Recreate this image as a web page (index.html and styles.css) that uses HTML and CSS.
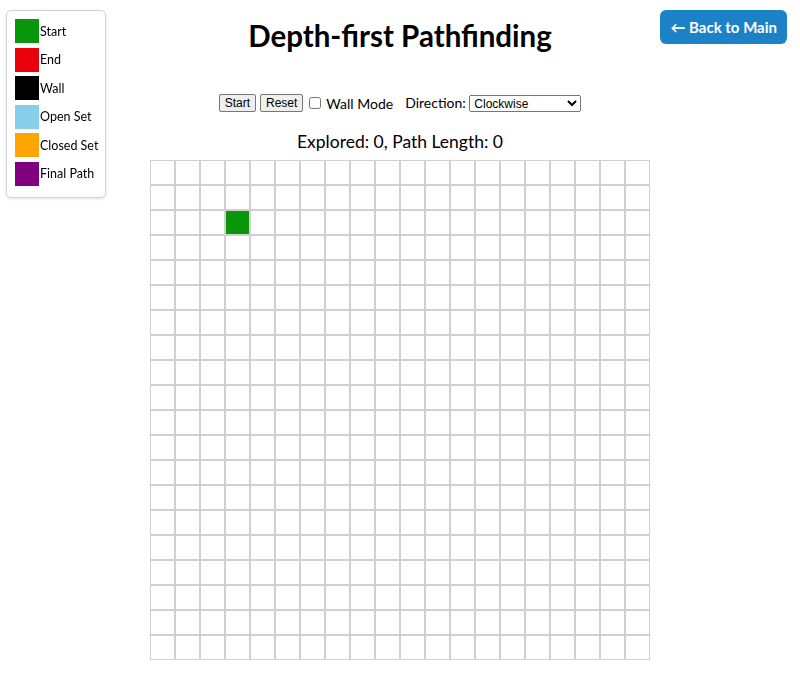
FILE: index.html
```html
<!DOCTYPE html>
<html lang="en">
<head>
    <meta charset="UTF-8">
    <meta name="viewport" content="width=device-width, initial-scale=1.0">
    <title>Depth-first Pathfinding</title>
    <link rel="stylesheet" href="styles.css">
</head>
<body>
    <!-- Legend -->
    <div class="legend">
        <div class="legend-item"><span class="swatch start"></span>Start</div>
        <div class="legend-item"><span class="swatch end"></span>End</div>
        <div class="legend-item"><span class="swatch wall"></span>Wall</div>
        <div class="legend-item"><span class="swatch open"></span>Open Set</div>
        <div class="legend-item"><span class="swatch closed"></span>Closed Set</div>
        <div class="legend-item"><span class="swatch path"></span>Final Path</div>
    </div>

    <a href="#" class="back-btn">&larr; Back to Main</a>

    <h1 class="title">Depth-first Pathfinding</h1>

    <div class="controls">
        <button id="startBtn">Start</button>
        <button id="resetBtn">Reset</button>
        <label class="wall-toggle"><input type="checkbox" id="wallMode"> Wall Mode</label>
        <label class="direction">Direction:
            <select id="direction">
                <option>Clockwise</option>
                <option>Counter-clockwise</option>
            </select>
        </label>
    </div>

    <div class="stats">Explored: <span id="explored">0</span>, Path Length: <span id="pathLength">0</span></div>

    <div class="grid" id="grid"></div>

    <script>
        const grid = document.getElementById("grid");
        const SIZE = 20;
        for (let r = 0; r < SIZE; r++) {
            for (let c = 0; c < SIZE; c++) {
                const cell = document.createElement("div");
                cell.className = "cell";
                if (r === 2 && c === 3) cell.classList.add("start");
                grid.appendChild(cell);
            }
        }
    </script>
</body>
</html>
```

FILE: styles.css
```css
/* General */
body {
    margin: 0;
    font-family: "Lato", "Open Sans", sans-serif;
    color: #000;
    background: #fff;
    text-align: center;
}

/* Legend */
.legend {
    position: fixed;
    top: 10px;
    left: 6px;
    width: 100px;
    box-sizing: border-box;
    padding: 8px 4px 11px 8px;
    border: 1px solid #d4d4d4;
    border-radius: 5px;
    background: #fff;
    box-shadow: 0 1px 3px rgba(0, 0, 0, 0.12);
    display: flex;
    flex-direction: column;
    gap: 4.6px;
    text-align: left;
}

.legend-item {
    display: flex;
    align-items: center;
    gap: 1px;
    font-size: 12.5px;
    height: 24px;
    white-space: nowrap;
}

.swatch {
    flex-shrink: 0;
    width: 24px;
    height: 24px;
    display: inline-block;
}

.swatch.start { background: #0a960a; }
.swatch.end { background: #e8000b; }
.swatch.wall { background: #000; }
.swatch.open { background: #87ceeb; }
.swatch.closed { background: #ffa500; }
.swatch.path { background: #800080; }

/* Back button */
.back-btn {
    position: fixed;
    top: 10px;
    right: 13px;
    padding: 8px 10px;
    background: #1c82c8;
    color: #fff;
    font-weight: bold;
    font-size: 15px;
    text-decoration: none;
    border-radius: 6px;
}

/* Title */
.title {
    font-size: 29.5px;
    margin: 18px 0 41px;
}

/* Controls */
.controls {
    display: flex;
    justify-content: center;
    align-items: center;
    gap: 4px;
    font-size: 14px;
}

.controls button {
    font-family: "Liberation Sans", Arial, sans-serif;
    font-size: 12px;
    padding: 1px 5px;
    background: #efefef;
    border: 1px solid #767676;
    border-radius: 2px;
}

.wall-toggle {
    display: flex;
    align-items: center;
    gap: 2px;
    margin-right: 8px;
}

.wall-toggle input {
    margin: 0 3px 0 2px;
    width: 12px;
    height: 12px;
}

.direction select {
    font-family: "Liberation Sans", Arial, sans-serif;
    font-size: 12px;
    width: 112px;
    height: 17px;
    padding: 0;
}

/* Stats */
.stats {
    font-size: 17.5px;
    margin: 19px 0 8px;
}

/* Grid */
.grid {
    display: grid;
    grid-template-columns: repeat(20, 25px);
    width: 500px;
    margin: 0 auto;
}

.cell {
    width: 25px;
    height: 25px;
    box-sizing: border-box;
    border: 1px solid #d0d0d0;
    background: #fff;
}

.cell.start {
    background: #0a960a;
}
```
